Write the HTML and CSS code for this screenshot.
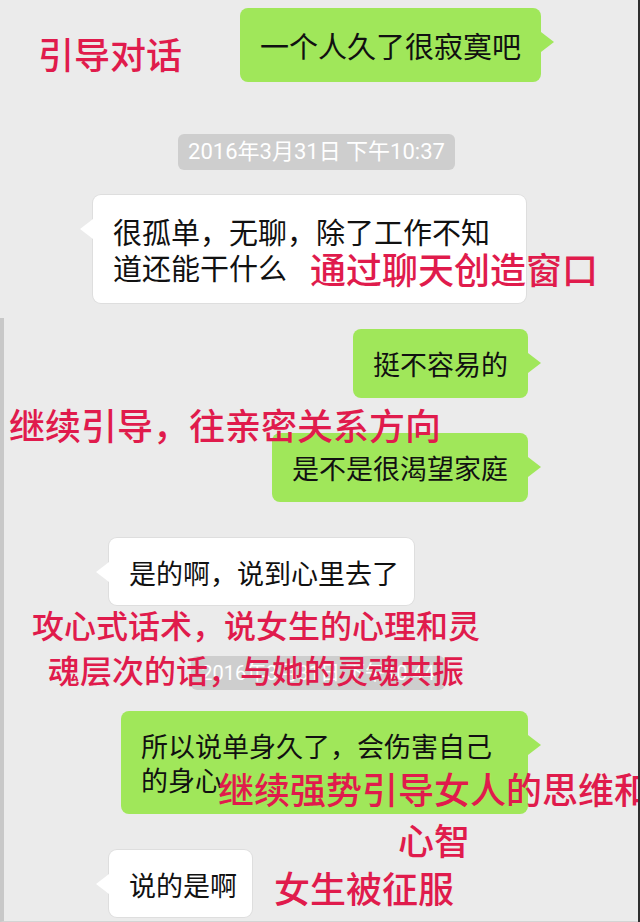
FILE: index.html
```html
<!DOCTYPE html>
<html lang="zh-CN">
<head>
<meta charset="utf-8">
<meta name="viewport" content="width=device-width, initial-scale=1">
<title>聊天记录</title>
<link rel="stylesheet" href="styles.css">
</head>
<body>
<main class="chat">
  <section class="part part-large">
    <div class="row sent">
      <p class="bubble">一个人久了很寂寞吧</p>
      <p class="note note-lead">引导对话</p>
    </div>
    <time class="stamp" datetime="2016-03-31T22:37">2016年3月31日 下午10:37</time>
    <div class="row received">
      <p class="bubble multiline">很孤单，无聊，除了工作不知<br>道还能干什么</p>
      <p class="note note-window">通过聊天创造窗口</p>
    </div>
  </section>
  <section class="part part-small">
    <div class="row sent">
      <p class="bubble">挺不容易的</p>
    </div>
    <div class="row sent">
      <p class="bubble">是不是很渴望家庭</p>
      <p class="note note-close">继续引导，往亲密关系方向</p>
    </div>
    <div class="row received">
      <p class="bubble">是的啊，说到心里去了</p>
    </div>
    <div class="row center">
      <time class="stamp" datetime="2016-03-31T22:44">2016年3月31日 下午10:44</time>
      <p class="note note-soul">攻心式话术，说女生的心理和灵<br>魂层次的话，与她的灵魂共振</p>
    </div>
    <div class="row sent">
      <p class="bubble multiline">所以说单身久了，会伤害自己<br>的身心</p>
      <p class="note note-mind">继续强势引导女人的思维和<br>心智</p>
    </div>
    <div class="row received">
      <p class="bubble">说的是啊</p>
      <p class="note note-won">女生被征服</p>
    </div>
  </section>
</main>
</body>
</html>
```
FILE: styles.css
```css
* {
  box-sizing: border-box;
}

body {
  margin: 0;
  background: #ebebeb;
  color: #111;
  font-family: Roboto, "Noto Sans CJK SC", sans-serif;
}

p {
  margin: 0;
}

.chat {
  display: flex;
  flex-direction: column;
  min-height: 100vh;
  border-right: 2px solid #2e2e2e;
  overflow: hidden;
}

.part {
  display: flex;
  flex-direction: column;
}

.part-large {
  padding: 8px 97px 14px 92px;
  font-size: 29px;
  line-height: 36px;
}

.part-small {
  flex: 1;
  gap: 35px;
  padding: 11px 110px 2px 104px;
  border-left: 4px solid #c8c8c8;
  border-bottom: 1px solid #d4d4d4;
  font-size: 27px;
  line-height: 34px;
}

.row {
  position: relative;
  display: flex;
}

.sent {
  justify-content: flex-end;
}

.received {
  padding: 1px;
}

.center {
  justify-content: center;
  margin: 15px 0 -14px;
}

.bubble {
  position: relative;
  border-radius: 8px;
  white-space: nowrap;
}

.sent .bubble {
  padding: 20px 20px 15px;
  background: #a0e75a;
}

.received .bubble {
  padding: 20px 15px 13px 20px;
  background: #fff;
  box-shadow: 0 0 0 1px #dedede;
}

.part-large .sent .bubble {
  padding: 22px 20px 16px;
}

.part-large .received .bubble {
  padding: 21px 20px 15px;
}

.part .row .multiline {
  padding-right: 36px;
}

.bubble::after {
  content: "";
  position: absolute;
  top: 24px;
  width: 13px;
  height: 20px;
}

.sent .bubble::after {
  left: 100%;
  background: #a0e75a;
  clip-path: polygon(0 0, 100% 50%, 0 100%);
}

.received .bubble::after {
  right: 100%;
  background: #fff;
  clip-path: polygon(100% 0, 0 50%, 100% 100%);
}

.stamp {
  align-self: center;
  border-radius: 6px;
  background: #cecece;
  color: #fff;
  white-space: nowrap;
}

.part-large .stamp {
  margin: 52px 0 24px;
  padding: 0 10px;
  font-size: 22px;
}

.part-small .stamp {
  padding: 0 10px;
  font-size: 20px;
}

.note {
  position: absolute;
  color: #e01b4c;
  font-size: 36px;
  line-height: 51px;
  font-weight: 500;
  text-align: center;
  white-space: nowrap;
}

.note-lead {
  top: 24px;
  left: -54px;
}

.note-window {
  top: 53px;
  left: 218px;
}

.note-close {
  top: -30px;
  left: -99px;
}

.note-soul {
  top: -51px;
  left: -76px;
  font-size: 32px;
  line-height: 45px;
}

.note-mind {
  top: 56px;
  left: 110px;
}

.note-won {
  top: 17px;
  left: 166px;
}
```
